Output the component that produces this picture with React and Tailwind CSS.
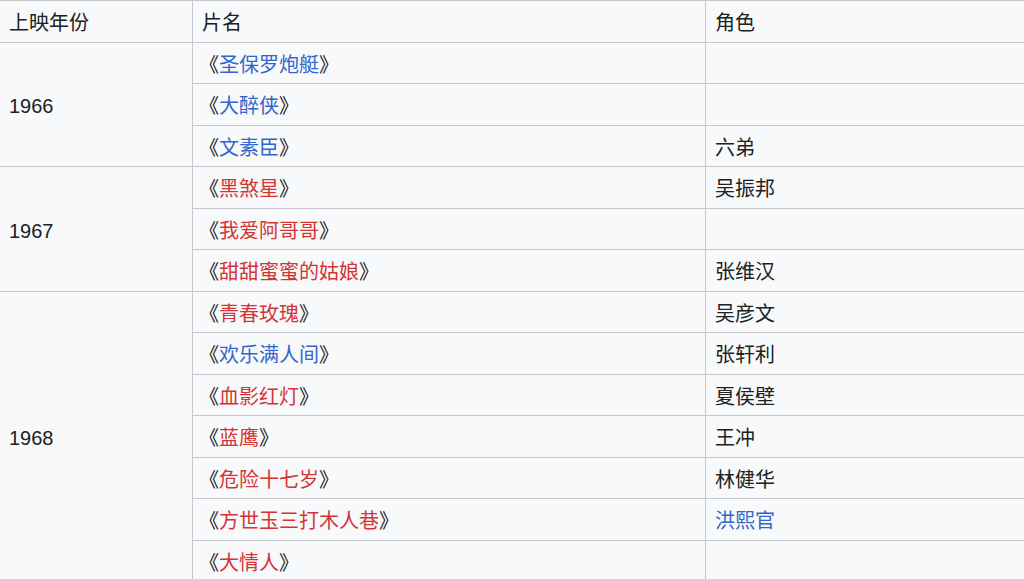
const groups = [
  {
    year: '1966',
    films: [
      { title: '圣保罗炮艇', link: 'blue', role: '' },
      { title: '大醉侠', link: 'blue', role: '' },
      { title: '文素臣', link: 'blue', role: '六弟' },
    ],
  },
  {
    year: '1967',
    films: [
      { title: '黑煞星', link: 'red', role: '吴振邦' },
      { title: '我爱阿哥哥', link: 'red', role: '' },
      { title: '甜甜蜜蜜的姑娘', link: 'red', role: '张维汉' },
    ],
  },
  {
    year: '1968',
    films: [
      { title: '青春玫瑰', link: 'red', role: '吴彦文' },
      { title: '欢乐满人间', link: 'blue', role: '张轩利' },
      { title: '血影红灯', link: 'red', role: '夏侯壁' },
      { title: '蓝鹰', link: 'red', role: '王冲' },
      { title: '危险十七岁', link: 'red', role: '林健华' },
      { title: '方世玉三打木人巷', link: 'red', role: '洪熙官', roleLink: true },
      { title: '大情人', link: 'red', role: '' },
    ],
  },
];

const cell = 'border border-[#c3c6ca] h-[41.5px] px-2 pt-[4px] pb-0 align-middle text-left font-normal';

export default function App() {
  return (
    <div className="w-[1024px] h-[579px] overflow-hidden bg-[#f8f9fa] text-[#202122] text-[20px] leading-[30px] font-['Liberation_Sans','Noto_Sans_CJK_SC',sans-serif]">
      <table className="border-collapse table-fixed w-[1030px] -ml-px">
        <colgroup>
          <col className="w-[193px]" />
          <col className="w-[513px]" />
          <col className="w-[324px]" />
        </colgroup>
        <thead>
          <tr>
            <th className={`${cell} pl-[9px]`}>上映年份</th>
            <th className={`${cell} pl-[9px]`}>片名</th>
            <th className={`${cell} pl-[9px]`}>角色</th>
          </tr>
        </thead>
        <tbody>
          {groups.map((g) =>
            g.films.map((f, i) => (
              <tr key={f.title}>
                {i === 0 && (
                  <td rowSpan={g.films.length} className={`${cell} pl-[9px]`}>
                    {g.year}
                  </td>
                )}
                <td className={`${cell} pl-[6px]`}>
                  《
                  <span className={f.link === 'blue' ? 'text-[#3366cc]' : 'text-[#d33535]'}>{f.title}</span>
                  》
                </td>
                <td className={`${cell} pl-[9px]`}>
                  {f.roleLink ? <span className="text-[#3366cc]">{f.role}</span> : f.role}
                </td>
              </tr>
            ))
          )}
        </tbody>
      </table>
    </div>
  );
}
